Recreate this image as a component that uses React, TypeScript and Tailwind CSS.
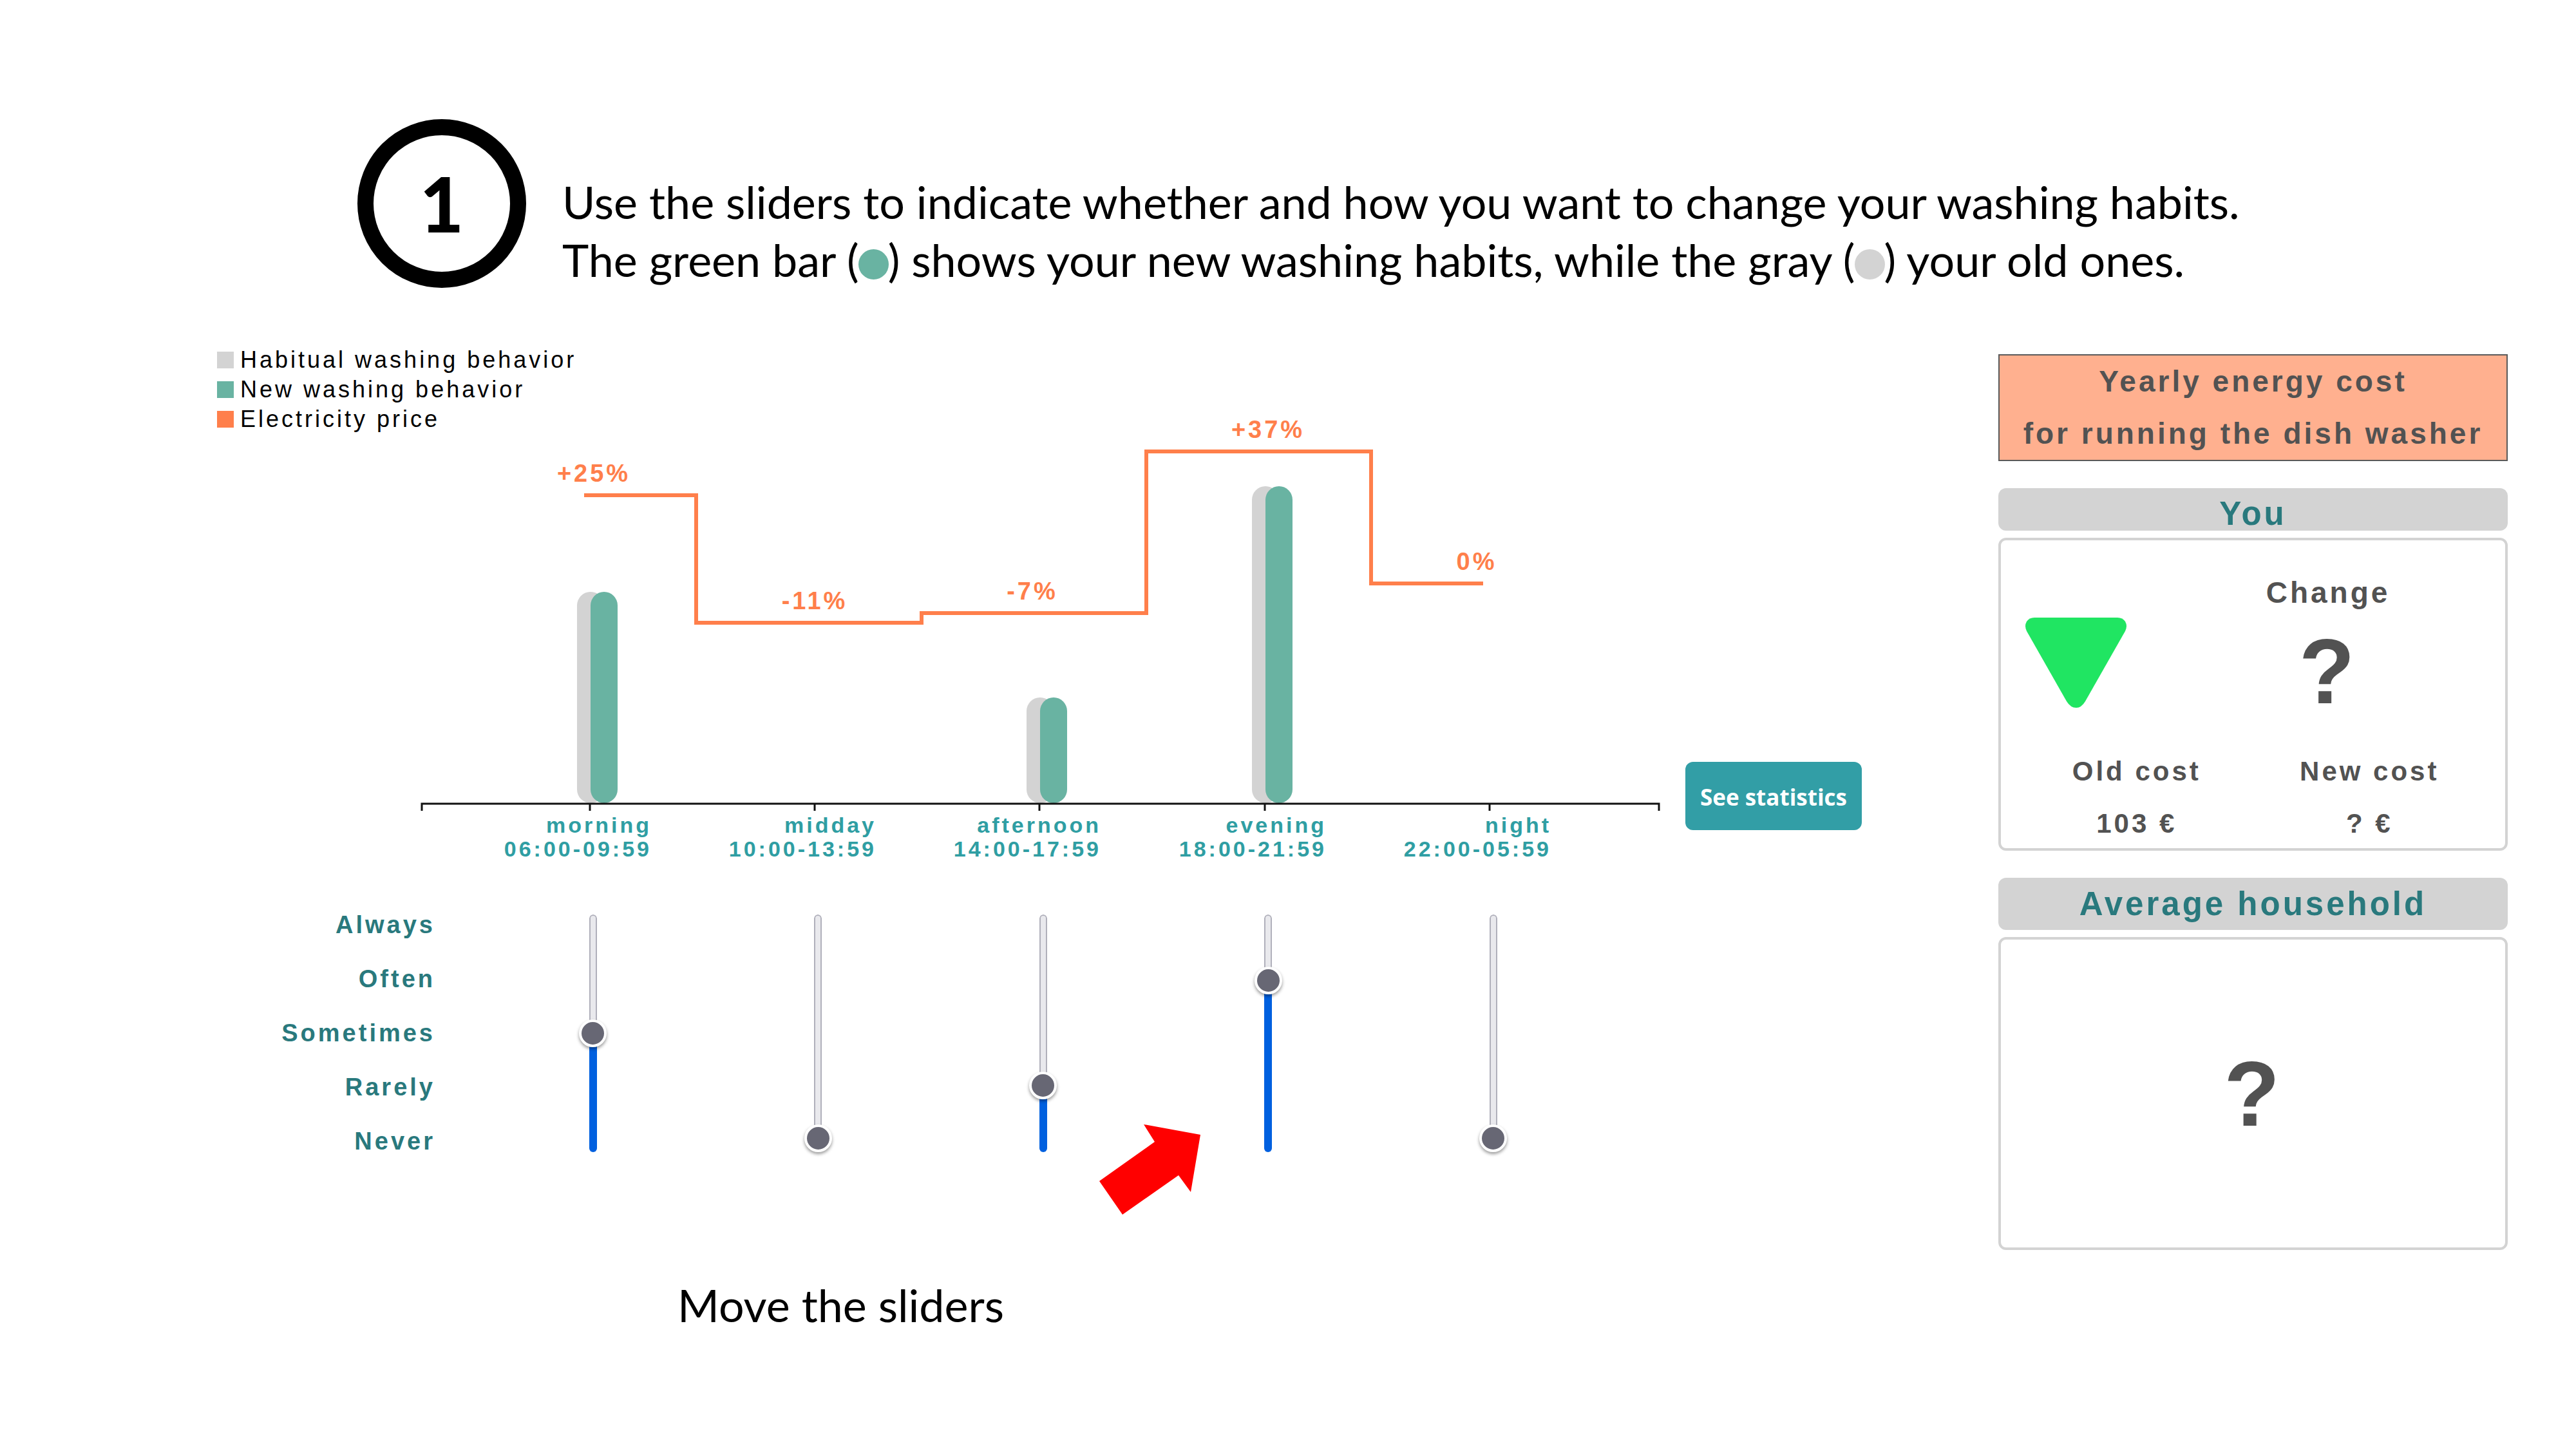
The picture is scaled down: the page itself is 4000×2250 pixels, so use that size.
import { useState } from "react";

type Period = {
  name: string;
  hours: string;
  center: number;
  habit: number;
  change: string;
  changeX: number;
  priceY: number;
};

const LEVELS = ["Always", "Often", "Sometimes", "Rarely", "Never"];

const PERIODS: Period[] = [
  { name: "morning", hours: "06:00-09:59", center: 916, habit: 2, change: "+25%", changeX: 922, priceY: 769 },
  { name: "midday", hours: "10:00-13:59", center: 1265, habit: 0, change: "-11%", changeX: 1265, priceY: 967 },
  { name: "afternoon", hours: "14:00-17:59", center: 1614, habit: 1, change: "-7%", changeX: 1603, priceY: 952 },
  { name: "evening", hours: "18:00-21:59", center: 1964, habit: 3, change: "+37%", changeX: 1969, priceY: 701 },
  { name: "night", hours: "22:00-05:59", center: 2313, habit: 0, change: "0%", changeX: 2293, priceY: 906 },
];

const LEGEND = [
  { label: "Habitual washing behavior", swatch: "bg-[#d3d3d3]" },
  { label: "New washing behavior", swatch: "bg-[#69b3a2]" },
  { label: "Electricity price", swatch: "bg-[#ff7f4b]" },
];

const BASELINE = 1247;
const LEVEL_HEIGHT = 164;

function Bar({ x, level, color }: { x: number; level: number; color: string }) {
  if (level === 0) return null;
  const height = level * LEVEL_HEIGHT;
  return <rect x={x} y={BASELINE - height} width={42} height={height} rx={21} fill={color} />;
}

function Chart({ values }: { values: number[] }) {
  return (
    <svg
      viewBox="337 536 2239 804"
      className="col-start-1 row-start-1 block h-auto w-full overflow-visible font-bold"
      role="img"
      aria-label="Washing behavior and electricity price by time of day"
    >
      {PERIODS.map((p, i) => (
        <g key={p.name}>
          <Bar x={p.center - 20} level={p.habit} color="#d3d3d3" />
          <Bar x={p.center + 1} level={values[i]} color="#69b3a2" />
        </g>
      ))}
      <path d="M655 1259V1248H2576V1259" fill="none" stroke="#111" strokeWidth="3" />
      {PERIODS.map((p) => (
        <g key={p.name}>
          <path d={`M${p.center} 1248V1259`} stroke="#111" strokeWidth="3" />
          <text x={p.center + 96} y={1293} textAnchor="end" fill="#2f9ea3" className="text-[34px] tracking-[4px]">
            {p.name}
          </text>
          <text x={p.center + 96} y={1330} textAnchor="end" fill="#2f9ea3" className="text-[34px] tracking-[4px]">
            {p.hours}
          </text>
          <text x={p.changeX} y={p.priceY - 21} textAnchor="middle" fill="#ff7f4b" className="text-[38px] tracking-[4px]">
            {p.change}
          </text>
        </g>
      ))}
      <path
        d="M907 769H1081V967H1431V952H1780V701H2129V906H2303"
        fill="none"
        stroke="#ff7f4b"
        strokeWidth="6"
      />
    </svg>
  );
}

function Slider({ label, value, onChange }: { label: string; value: number; onChange: (v: number) => void }) {
  return (
    <div className="grid grid-cols-[43px] justify-center">
      <div className="col-start-1 row-start-1 flex h-[369px] w-3 flex-col justify-self-center overflow-hidden rounded-full">
        <div className="flex-1 rounded-t-full border-2 border-b-0 border-[#b0b0bb] bg-[#e9e9ed]" />
        <div className="shrink-0 bg-[#0060df]" style={{ height: value === 0 ? 0 : `${value * 22 + 6}%` }} />
      </div>
      <input
        type="range"
        min={0}
        max={4}
        step={1}
        value={value}
        aria-label={label}
        onChange={(e) => onChange(Number(e.target.value))}
        className="col-start-1 row-start-1 m-0 h-[369px] w-[43px] cursor-pointer appearance-none bg-transparent [direction:rtl] [writing-mode:vertical-lr] [&::-webkit-slider-thumb]:size-[43px] [&::-webkit-slider-thumb]:appearance-none [&::-webkit-slider-thumb]:rounded-full [&::-webkit-slider-thumb]:border-4 [&::-webkit-slider-thumb]:border-white [&::-webkit-slider-thumb]:bg-[#676774] [&::-webkit-slider-thumb]:shadow-[0_3px_5px_rgba(0,0,0,0.4)]"
      />
    </div>
  );
}

export default function App() {
  const [values, setValues] = useState(PERIODS.map((p) => p.habit));
  const setValue = (index: number, next: number) =>
    setValues((current) => current.map((v, i) => (i === index ? next : v)));

  return (
    <div className="min-h-screen bg-white pb-16 font-['Liberation_Sans',sans-serif] text-black">
      <header className="flex items-start gap-14 pt-[185px] pl-[555px] font-['Lato',sans-serif]">
        <div className="flex size-[262px] shrink-0 items-center justify-center rounded-full border-[25px] border-black text-[118px] leading-none font-black">
          1
        </div>
        <h1 className="mt-[83px] text-[70px] leading-[90px] font-normal">
          Use the sliders to indicate whether and how you want to change your washing habits.
          <br />
          The green bar (
          <span className="-mx-px inline-block size-[47px] rounded-full bg-[#69b3a2] align-[-4px]" />) shows your new
          washing habits, while the gray (
          <span className="-mx-px inline-block size-[47px] rounded-full bg-[#d3d3d3] align-[-4px]" />) your old ones.
        </h1>
      </header>

      <main className="mt-[88px] flex items-start pr-[106px] pl-[337px]">
        <section className="min-w-0 flex-1">
          <div className="grid">
            <Chart values={values} />
            <ul className="col-start-1 row-start-1 self-start justify-self-start text-[36px] leading-[46px] tracking-[4px]">
              {LEGEND.map((item) => (
                <li key={item.label} className="flex items-center gap-2.5">
                  <span className={`size-[26px] ${item.swatch}`} />
                  {item.label}
                </li>
              ))}
            </ul>
          </div>

          <div className="relative mt-[54px] grid grid-cols-[818fr_repeat(5,699fr)_165fr] items-center">
            <ul className="pr-[70px] text-right text-[38px] leading-[84px] font-bold tracking-[4px] text-[#29797d]">
              {LEVELS.map((level) => (
                <li key={level}>{level}</li>
              ))}
            </ul>
            {PERIODS.map((p, i) => (
              <Slider key={p.name} label={`${p.name} ${p.hours}`} value={values[i]} onChange={(v) => setValue(i, v)} />
            ))}
            <svg viewBox="0 0 158 140" className="absolute top-[352px] left-[61.2%] w-[158px]" aria-hidden="true">
              <path d="M69 0 157 16 142 105 123 79 36 140 0 88 86 27Z" fill="#f00" />
            </svg>
          </div>
        </section>

        <button
          type="button"
          className="mt-[647px] ml-[41px] h-[106px] w-[274px] shrink-0 rounded-xl bg-[#329ea6] pt-1 font-['Open_Sans',sans-serif] text-[35px] font-bold text-white"
        >
          See statistics
        </button>

        <aside className="mt-3.5 ml-[212px] w-[791px] shrink-0 text-center font-bold tracking-[4px] text-[#525252]">
          <h2 className="border-2 border-[#5a5a5a] bg-[#ffb08f] text-[46px] leading-[81px]">
            Yearly energy cost
            <br />
            for running the dish washer
          </h2>

          <h3 className="mt-[42px] h-[66px] rounded-xl bg-[#d3d3d3] text-[51px] leading-[80px] text-[#29797d]">You</h3>
          <div className="mt-[11px] min-h-[486px] rounded-xl border-4 border-[#d3d3d3] pt-[41px]">
            <div className="flex items-start">
              <svg viewBox="0 0 157 140" className="mx-[38px] mt-[79px] w-[157px] shrink-0" aria-hidden="true">
                <path
                  d="M14 0H143Q151 0 155 6Q159 13 155 21L93 130Q87 140 79 140Q70 140 64 130L2 21Q-2 13 2 6Q6 0 14 0Z"
                  fill="#20e562"
                />
              </svg>
              <dl className="flex-1">
                <dt className="text-[46px] leading-[81px]">Change</dt>
                <dd className="text-[142px] leading-[164px]">?</dd>
              </dl>
            </div>
            <dl className="mt-8 -mb-1 grid grid-cols-2 px-[30px] text-[42px] leading-[81px]">
              <div>
                <dt>Old cost</dt>
                <dd>103 €</dd>
              </div>
              <div>
                <dt>New cost</dt>
                <dd>? €</dd>
              </div>
            </dl>
          </div>

          <h3 className="mt-[42px] rounded-xl bg-[#d3d3d3] text-[51px] leading-[81px] text-[#29797d]">
            Average household
          </h3>
          <div className="mt-[11px] flex min-h-[486px] items-center justify-center rounded-xl border-4 border-[#d3d3d3] text-[142px]">
            ?
          </div>
        </aside>
      </main>

      <p className="mt-10 pl-[1052px] font-['Lato',sans-serif] text-[70px] leading-[90px]">Move the sliders</p>
    </div>
  );
}
